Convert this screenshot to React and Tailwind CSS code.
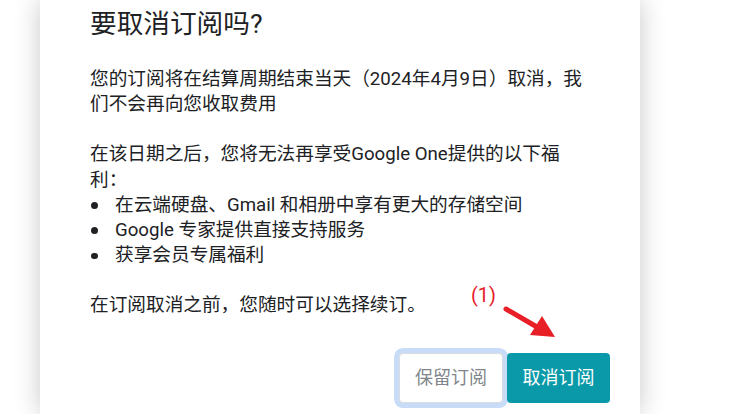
export default function App() {
  const font = { fontFamily: 'Roboto, "Noto Sans CJK SC", sans-serif' };
  return (
    <div className="relative w-[735px] h-[414px] overflow-hidden bg-white" style={font}>
      <div className="ml-[40px] w-[600px] h-[414px] bg-white shadow-[0_0_24px_rgba(0,0,0,0.22)] pl-[50px] pr-[30px] pt-[8px]">
        <h1 className="text-[26.67px] leading-[32px] text-[#202124] font-normal whitespace-nowrap">要取消订阅吗?</h1>
        <div className="mt-[27px] text-[18.67px] leading-[25.2px] text-[#202124] whitespace-nowrap">
          <p>
            您的订阅将在结算周期结束当天（2024年4月9日）取消，我
            <br />
            们不会再向您收取费用
          </p>
          <p className="mt-[25px]">
            在该日期之后，您将无法再享受Google One提供的以下福
            <br />
            利：
          </p>
          <ul>
            {["在云端硬盘、Gmail 和相册中享有更大的存储空间", "Google 专家提供直接支持服务", "获享会员专属福利"].map((t) => (
              <li key={t} className="flex items-center">
                <span className="w-[25px] flex items-center">
                  <span className="ml-[1px] w-[6.5px] h-[6.5px] rounded-full bg-[#202124]" />
                </span>
                <span>{t}</span>
              </li>
            ))}
          </ul>
          <p className="mt-[25px]">在订阅取消之前，您随时可以选择续订。</p>
        </div>
        <div className="mt-[34px] flex justify-end gap-[4px]">
          <button className="w-[104px] h-[50px] rounded-[4px] border border-[#dadce0] bg-white shadow-[0_0_0_5px_#c9dcf7] text-[18px] text-[#80868b]">
            保留订阅
          </button>
          <button className="w-[103px] h-[50px] rounded-[4px] bg-[#0a99a8] text-[18px] text-white">
            取消订阅
          </button>
        </div>
      </div>
      <div className="absolute left-[471px] top-[283px] text-[20px] leading-[24px] text-[#e8202a]">(1)</div>
      <svg className="absolute left-[495px] top-[300px]" width="70" height="45" viewBox="495 300 70 45">
        <line x1="506" y1="309" x2="537" y2="327" stroke="#e81f27" strokeWidth="5" strokeLinecap="round" />
        <polygon points="555,337 530,335 542,316" fill="#e81f27" />
      </svg>
    </div>
  );
}
